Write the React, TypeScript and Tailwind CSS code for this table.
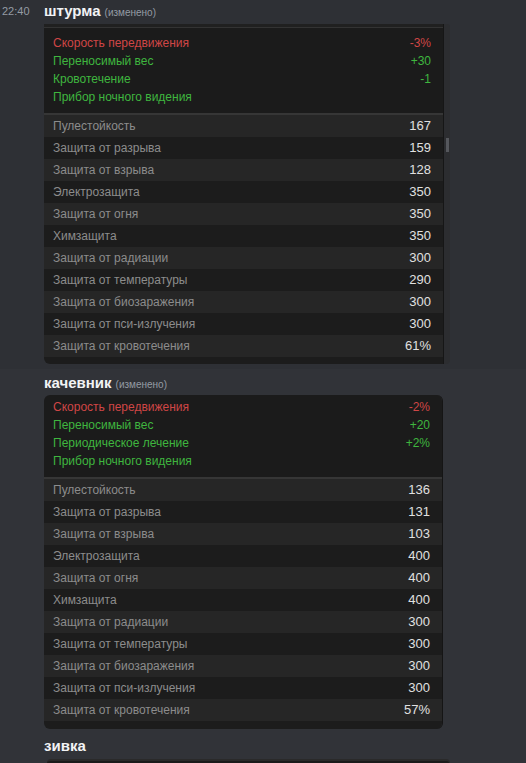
const effects1 = [
  { label: 'Скорость передвижения', value: '-3%', bad: true },
  { label: 'Переносимый вес', value: '+30' },
  { label: 'Кровотечение', value: '-1' },
  { label: 'Прибор ночного видения', value: '' },
]

const stats1 = [
  ['Пулестойкость', '167'],
  ['Защита от разрыва', '159'],
  ['Защита от взрыва', '128'],
  ['Электрозащита', '350'],
  ['Защита от огня', '350'],
  ['Химзащита', '350'],
  ['Защита от радиации', '300'],
  ['Защита от температуры', '290'],
  ['Защита от биозаражения', '300'],
  ['Защита от пси-излучения', '300'],
  ['Защита от кровотечения', '61%'],
]

const effects2 = [
  { label: 'Скорость передвижения', value: '-2%', bad: true },
  { label: 'Переносимый вес', value: '+20' },
  { label: 'Периодическое лечение', value: '+2%' },
  { label: 'Прибор ночного видения', value: '' },
]

const stats2 = [
  ['Пулестойкость', '136'],
  ['Защита от разрыва', '131'],
  ['Защита от взрыва', '103'],
  ['Электрозащита', '400'],
  ['Защита от огня', '400'],
  ['Химзащита', '400'],
  ['Защита от радиации', '300'],
  ['Защита от температуры', '300'],
  ['Защита от биозаражения', '300'],
  ['Защита от пси-излучения', '300'],
  ['Защита от кровотечения', '57%'],
]

type Effect = { label: string; value: string; bad?: boolean }

function StatBlock({ effects, stats, top, bottom }: { effects: Effect[]; stats: string[][]; top: string; bottom: string }) {
  return (
    <>
      <div className={`bg-[#1b1b1b] pb-[7px] ${top}`}>
        {effects.map((e) => (
          <div key={e.label}
            className={`h-[18px] flex items-center justify-between pl-[9px] pr-[12px] ${e.bad ? 'text-[#cf4646]' : 'text-[#3fb63f]'}`}>
            <span>{e.label}</span>
            <span>{e.value}</span>
          </div>
        ))}
      </div>
      <div className="h-[2px] bg-[#363636]" />
      <div>
        {stats.map(([label, value], i) => (
          <div key={label}
            className={`h-[22px] flex items-center justify-between pl-[9px] pr-[12px] ${i % 2 === 0 ? 'bg-[#262626]' : 'bg-[#1c1c1c]'}`}>
            <span className="text-[#8c8c8c]">{label}</span>
            <span className="text-[#e0e0e0] text-[13px]">{value}</span>
          </div>
        ))}
      </div>
      <div className={`bg-[#1c1c1c] ${bottom}`} />
    </>
  )
}

function Username({ name, edited }: { name: string; edited?: boolean }) {
  return (
    <div className="h-[20px] flex items-baseline gap-1">
      <span className="text-[15px] font-bold text-[#f2f3f5] leading-[20px]">{name}</span>
      {edited && <span className="text-[10px] text-[#949ba4]">(изменено)</span>}
    </div>
  )
}

export default function App() {
  return (
    <div className="w-[526px] h-[763px] overflow-hidden bg-[#313338] font-['Liberation_Sans',sans-serif]">
      <div className="bg-[#2e3035] flex pt-px pb-[5px]">
        <div className="w-[44px] pl-[2px] pt-[3px] text-[11px] text-[#949ba4] leading-[14px]">22:40</div>
        <div>
          <Username name="штурма" edited />
          <div className="mt-[3px] flex w-[406px]">
            <div className="w-[399px] text-[12px] rounded-bl-[6px] overflow-hidden border-t-[3px] border-[#202020]">
              <div className="h-px bg-[#333333]" />
              <StatBlock effects={effects1} stats={stats1} top="pt-[6px]" bottom="h-[7px]" />
            </div>
            <div className="w-[7px] bg-[#2c2d30] border-l border-[#161616] rounded-tr-[3px] rounded-br-[4px] flex flex-col">
              <div className="mt-[114px] ml-[2px] w-[3px] h-[14px] bg-[#55575c]" />
            </div>
          </div>
        </div>
      </div>
      <div className="flex pt-[4px]">
        <div className="w-[44px]" />
        <div>
          <Username name="качевник" edited />
          <div className="mt-[2px] w-[399px] text-[12px] rounded-[6px] overflow-hidden border-r border-[#151515]">
            <StatBlock effects={effects2} stats={stats2} top="pt-[3px]" bottom="h-[8px]" />
          </div>
        </div>
      </div>
      <div className="flex pt-[7px]">
        <div className="w-[44px]" />
        <div>
          <Username name="зивка" />
          <div className="mt-[3px] ml-[3px] w-[403px] h-[40px] bg-[#1b1b1b] border-t-[2px] border-r border-[#2a2a2a] rounded-t-[4px]" />
        </div>
      </div>
    </div>
  )
}
